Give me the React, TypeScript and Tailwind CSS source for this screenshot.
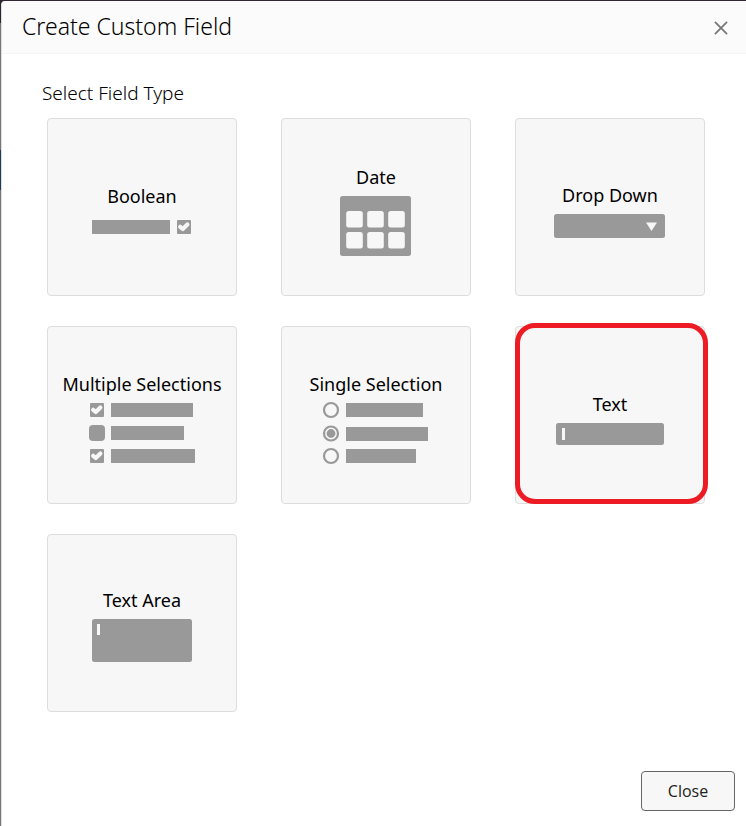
import type { ReactNode } from "react";

function CheckBoxGlyph({ x, y }: { x: number; y: number }) {
  return (
    <g transform={`translate(${x} ${y})`}>
      <rect width="14" height="14" rx="1" fill="#999" />
      <path d="M3.2 6.8 L5.8 9 L10.4 4.6" fill="none" stroke="#f7f7f7" strokeWidth="4.2" strokeLinecap="round" strokeLinejoin="round" />
    </g>
  );
}

function BooleanIcon() {
  return (
    <svg width="100" height="22" viewBox="0 0 100 22" aria-hidden="true">
      <rect x="0" y="5" width="78" height="14" fill="#999" />
      <CheckBoxGlyph x={85} y={5} />
    </svg>
  );
}

function DateIcon() {
  return (
    <svg width="72" height="60" viewBox="0 0 72 60" aria-hidden="true">
      <rect width="71" height="60" rx="2.5" fill="#999" />
      {[15, 36].map((y) =>
        [6, 27, 48].map((x) => (
          <rect key={`${x}-${y}`} x={x + 0.2} y={y} width="16.6" height="16.6" rx="2.5" fill="#f7f7f7" />
        )),
      )}
    </svg>
  );
}

function DropDownIcon() {
  return (
    <svg width="112" height="24" viewBox="0 0 112 24" aria-hidden="true">
      <rect width="111" height="24" rx="2.5" fill="#999" />
      <path d="M92 8.5H103L97.5 17Z" fill="#f7f7f7" />
    </svg>
  );
}

function MultipleIcon() {
  return (
    <svg width="106" height="62" viewBox="0 0 106 62" aria-hidden="true">
      <CheckBoxGlyph x={1} y={0} />
      <rect x="0" y="22" width="16" height="16" rx="4" fill="#999" />
      <CheckBoxGlyph x={1} y={46} />
      <rect x="22" y="0" width="82" height="14" fill="#999" />
      <rect x="22" y="23" width="73" height="14" fill="#999" />
      <rect x="22" y="46" width="84" height="14" fill="#999" />
    </svg>
  );
}

function SingleIcon() {
  return (
    <svg width="106" height="62" viewBox="0 0 106 62" className="overflow-visible" aria-hidden="true">
      <g fill="none" stroke="#999" strokeWidth="2.2">
        <circle cx="8" cy="7" r="7" />
        <circle cx="8" cy="30.5" r="7" />
        <circle cx="8" cy="53" r="7" />
      </g>
      <circle cx="8" cy="30.5" r="4.4" fill="#999" />
      <rect x="23" y="0" width="77" height="14" fill="#999" />
      <rect x="23" y="24" width="82" height="14" fill="#999" />
      <rect x="23" y="46" width="70" height="14" fill="#999" />
    </svg>
  );
}

function TextIcon() {
  return (
    <svg width="108" height="22" viewBox="0 0 108 22" aria-hidden="true">
      <rect width="108" height="22" rx="2.5" fill="#999" />
      <rect x="6" y="5" width="3" height="12" fill="#f7f7f7" />
    </svg>
  );
}

function TextAreaIcon() {
  return (
    <svg width="100" height="46" viewBox="0 0 100 46" aria-hidden="true">
      <rect width="100" height="43" rx="2.5" fill="#999" />
      <rect x="5" y="5" width="3" height="11" fill="#f7f7f7" />
    </svg>
  );
}

const fieldTypes: { label: string; icon: ReactNode; highlighted?: boolean }[] = [
  { label: "Boolean", icon: <BooleanIcon /> },
  { label: "Date", icon: <DateIcon /> },
  { label: "Drop Down", icon: <DropDownIcon /> },
  { label: "Multiple Selections", icon: <MultipleIcon /> },
  { label: "Single Selection", icon: <SingleIcon /> },
  { label: "Text", icon: <TextIcon />, highlighted: true },
  { label: "Text Area", icon: <TextAreaIcon /> },
];

export default function App() {
  return (
    <div className="flex min-h-screen bg-[#2f2633] pt-px font-['Noto_Sans','Open_Sans',sans-serif] text-[#222]">
      <div className="flex w-px shrink-0 flex-col bg-[#777]" aria-hidden="true">
        <div className="h-[22px] bg-[#2b2530]" />
        <div className="mt-[127px] h-10 bg-[#1f3a5f]" />
      </div>
      <div role="dialog" aria-labelledby="dialog-title" className="flex min-w-0 flex-1 flex-col rounded-tl-sm border-l border-[#ddd] bg-white">
        <header className="flex h-[53px] items-start justify-between rounded-tl-sm border-b border-[#f5f5f5] bg-[#fbfbfb] pr-4 pl-5">
          <h1 id="dialog-title" className="pt-[9px] text-[23px] leading-8 font-light text-black">Create Custom Field</h1>
          <button type="button" aria-label="Close dialog" className="mt-[18px] p-0.5">
            <svg width="14" height="14" viewBox="0 0 14 14" fill="none" stroke="#777" strokeWidth="1.8" strokeLinecap="round" aria-hidden="true">
              <path d="M1.4 1.4 12.6 12.6M12.6 1.4 1.4 12.6" />
            </svg>
          </button>
        </header>
        <main className="flex-1 pt-[25px] pr-[41px] pl-10">
          <h2 className="text-[19px] leading-7 font-light text-black">Select Field Type</h2>
          <div className="mt-[11px] ml-[5px] grid grid-cols-3 gap-x-11 gap-y-[30px]">
            {fieldTypes.map((type) => (
              <button
                key={type.label}
                type="button"
                className="relative flex h-[178px] flex-col items-center justify-center rounded border border-[#ddd] bg-[#f7f7f7]"
              >
                <span className="text-lg leading-[38px] whitespace-nowrap text-black">{type.label}</span>
                {type.icon}
                {type.highlighted && (
                  <span className="pointer-events-none absolute -top-1 -right-1 -bottom-px -left-px rounded-[20px] border-5 border-[#ed1c24]" />
                )}
              </button>
            ))}
          </div>
        </main>
        <footer className="flex justify-end px-[11px] pt-4 pb-[15px]">
          <button type="button" className="h-10 w-[94px] rounded border border-[#666] bg-[#f7f7f7] font-['Open_Sans','Noto_Sans',sans-serif] text-base">
            Close
          </button>
        </footer>
      </div>
    </div>
  );
}
